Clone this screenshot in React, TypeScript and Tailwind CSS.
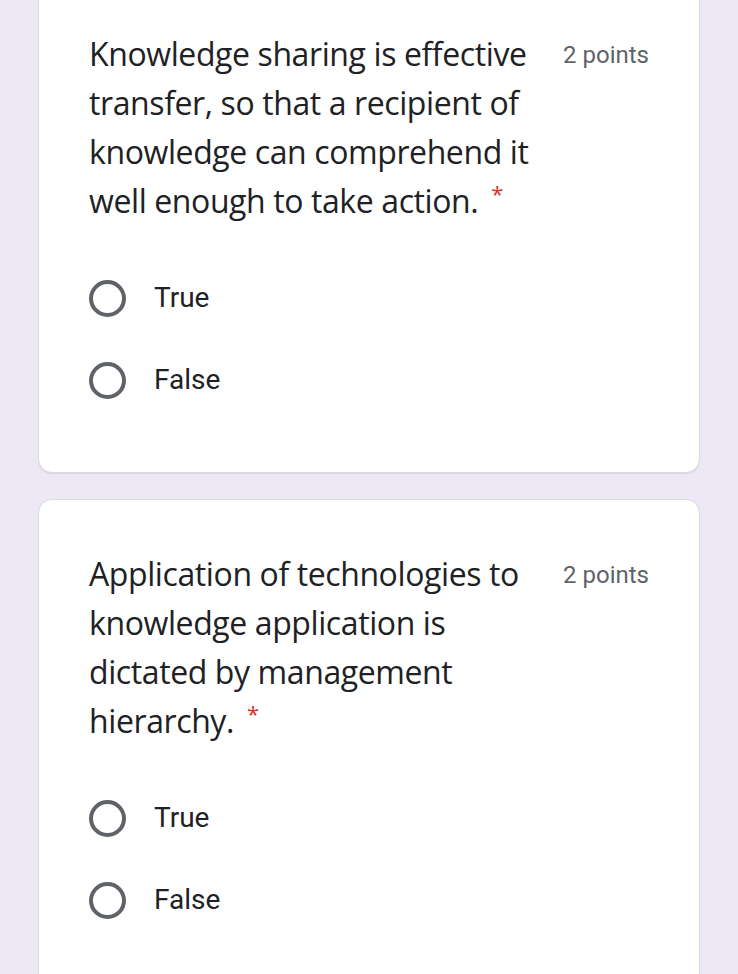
import React from 'react';

interface QuestionProps {
  title: string;
  points: number;
  options: string[];
}

const Radio: React.FC<{ label: string }> = ({ label }) => (
  <div className="h-[82px] flex items-center gap-[28px]">
    <div className="w-[37px] h-[37px] rounded-full border-[4px] border-[#5f6368] shrink-0" />
    <span className="text-[28px] text-[#202124] font-['Roboto',sans-serif]">{label}</span>
  </div>
);

const Question: React.FC<QuestionProps> = ({ title, points, options }) => (
  <div className="bg-white border border-[#dadce0] rounded-[14px] shadow-[0_1px_1px_rgba(0,0,0,0.08)] pl-[50px] pr-[50px] pt-[49px] pb-[51px]">
    <div className="flex items-start justify-between">
      <div className="w-[458px] text-[32px] leading-[49px] text-[#202124] font-['Open_Sans',sans-serif] tracking-[-0.4px]">
        {title}
        <span className="inline-block text-[#d93025] text-[22px] leading-none align-top ml-[13px] mt-[6px]">*</span>
      </div>
      <span className="text-[24px] leading-[49px] text-[#5f6368] font-['Roboto',sans-serif] whitespace-nowrap mt-[2px]">
        {points} points
      </span>
    </div>
    <div className="mt-[32px]">
      {options.map((o) => (
        <Radio key={o} label={o} />
      ))}
    </div>
  </div>
);

export default function App() {
  return (
    <div className="min-h-screen bg-[#ede7f6] overflow-hidden">
      <div className="mx-[38px] -mt-[21px] flex flex-col gap-[26px]">
        <Question
          title="Knowledge sharing is effective transfer, so that a recipient of knowledge can comprehend it well enough to take action."
          points={2}
          options={['True', 'False']}
        />
        <Question
          title="Application of technologies to knowledge application is dictated by management hierarchy."
          points={2}
          options={['True', 'False']}
        />
      </div>
    </div>
  );
}
